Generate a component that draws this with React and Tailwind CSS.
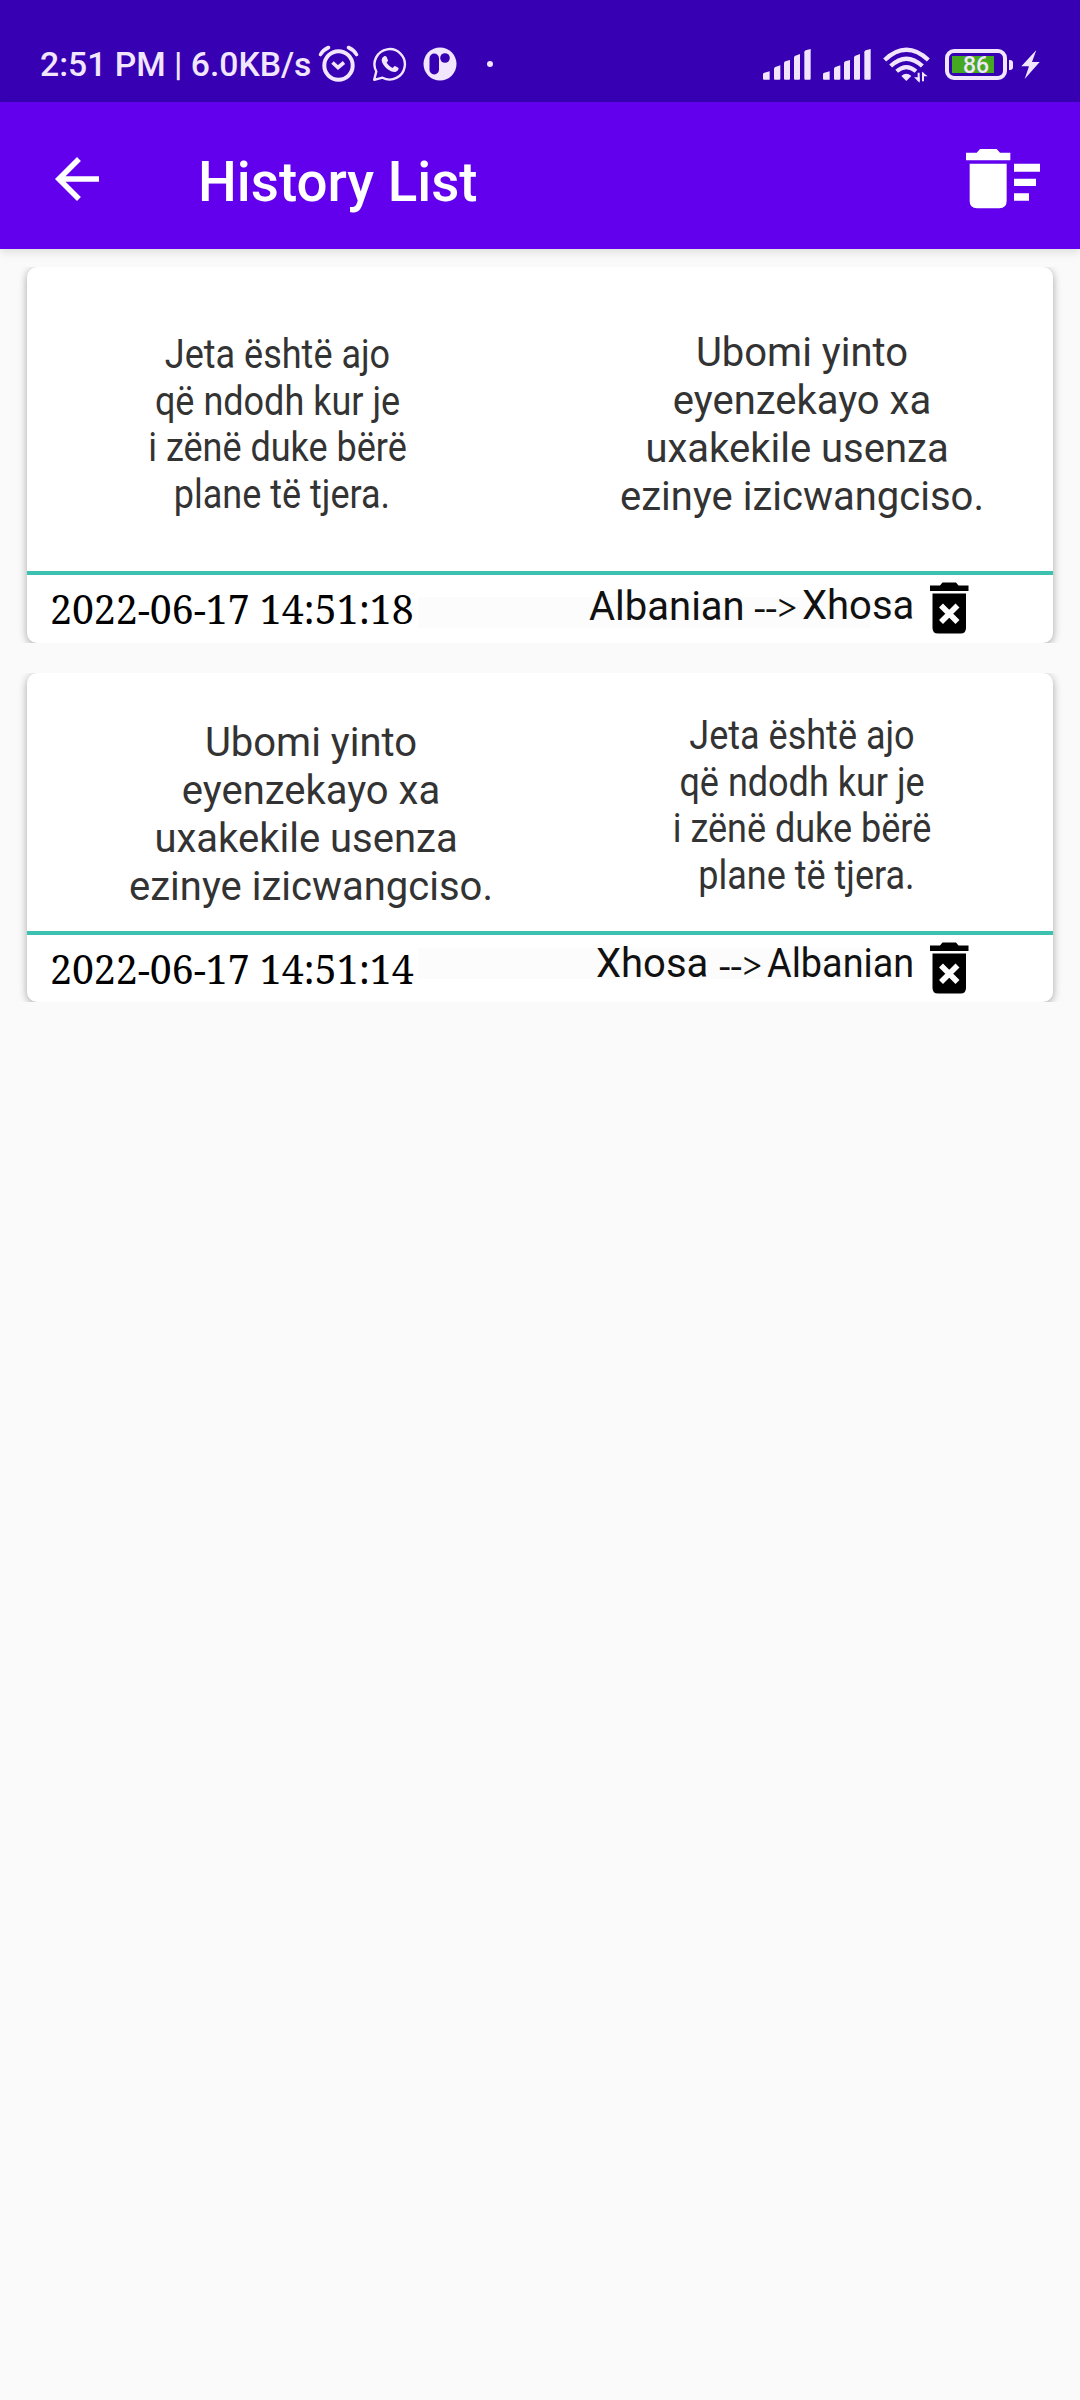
import React from "react";

const XHOSA = ["Ubomi yinto", "eyenzekayo xa", "uxakekile usenza\u00a0", "ezinye izicwangciso."];
const ALBANIAN = ["Jeta është ajo", "që ndodh kur je", "i zënë duke bërë", "\u00a0plane të tjera."];

function Signal({ className }) {
  return (
    <svg className={className} width="48" height="31" viewBox="0 0 144 93" fill="#f1e6fd">
      <path d="M0 76Q0 72 4 71L20 67V92H3Q0 92 0 89Z" />
      <path d="M33 60Q33 56 37 54L52 49V89Q52 92 49 92H36Q33 92 33 89Z" />
      <path d="M63 43Q63 39 67 37L81 33V89Q81 92 78 92H66Q63 92 63 89Z" />
      <path d="M93 26Q93 22 97 20L111 15V89Q111 92 108 92H96Q93 92 93 89Z" />
      <path d="M124 10Q124 6 128 4L143 0V89Q143 92 140 92H127Q124 92 124 89Z" />
    </svg>
  );
}

function StatusBar() {
  return (
    <div className="flex h-[102px] items-center bg-[#3700b3] pt-[26px] pl-[40px] text-[#f1e6fd]">
      <span className="mt-[2px] w-[278px] whitespace-nowrap text-[33.7px] leading-[40px] font-medium">2:51 PM | 6.0KB/s</span>
      <svg width="41" height="38" viewBox="0 0 41 38" fill="none" stroke="#f1e6fd">
        <circle cx="20.5" cy="20.5" r="14.2" strokeWidth="4" />
        <path d="M2.5 9.5Q5 5 10.500 2.500M38.500 9.500Q36 5 30.500 2.500" strokeWidth="3.600" strokeLinecap="round" />
        <path d="M14.500 17.500L20 22.500L26 17.500" strokeWidth="3.600" />
      </svg>
      <svg className="ml-[14px]" width="34" height="34" viewBox="0 0 34 34" fill="none">
        <path d="M1.200 32.800L3.300 24.500A15.200 15.200 0 1 1 9.500 30.700Z" stroke="#f1e6fd" strokeWidth="2.400" strokeLinejoin="round" />
        <path d="M11.200 9.200C12 8.900 13.200 9 13.600 9.900L15 13.200C15.200 14 14 15 13.600 15.600C15 18.300 17.200 20 19.700 21C20.500 20.300 21.300 18.900 22 19.100L25.300 20.800C26 21.400 25.300 24.300 22.400 25C18 25.600 10 20 8.700 13.700C8.500 11.500 9.600 10 11.200 9.200Z" fill="#f1e6fd" />
      </svg>
      <svg className="ml-[16px]" width="34" height="34" viewBox="0 0 34 34">
        <circle cx="17" cy="17" r="16.500" fill="#f1e6fd" />
        <rect x="6.500" y="6.500" width="9.500" height="21" rx="4.700" fill="#3700b3" />
        <circle cx="22" cy="11" r="4.800" fill="#3700b3" />
      </svg>
      <span className="ml-[30px] size-[6px] rounded-full bg-[#f1e6fd]" />
      <div className="mt-[1px] ml-[270px] flex items-center">
        <Signal />
        <Signal className="ml-[12px]" />
        <svg className="ml-[12px]" width="48" height="36" viewBox="0 0 144 108" fill="none" stroke="#f1e6fd">
          <path d="M5 39Q70 -22 136 39" strokeWidth="13" />
          <path d="M23 57Q70 13 118 57" strokeWidth="13" />
          <path d="M41 73Q70 48 99 73" strokeWidth="12" />
          <path d="M55 87Q70 74 85 87L70 102Z" fill="#f1e6fd" stroke="none" />
          <path d="M107 77V103M120 103V77" strokeWidth="6" />
          <path d="M93 91L110 107V91ZM117 88H134L117 74Z" fill="#f1e6fd" stroke="none" />
        </svg>
        <div className="ml-[14px] flex h-[31px] w-[62px] items-center rounded-[9px] border-[4px] border-[#f1e6fd] pl-[3px]">
          <div className="flex h-[17px] w-[42px] items-center bg-[#45a821] pt-[2px] pl-[11px] text-[23px] leading-[17px] font-medium text-[#f1e6fd]">86</div>
        </div>
        <div className="ml-[2px] h-[10px] w-[4px] rounded-r-[3px] bg-[#f1e6fd]" />
        <svg className="ml-[8px]" width="19" height="29" viewBox="0 0 57 87" fill="#f1e6fd">
          <path d="M46 0L1 49H24L11 87L56 36H33Z" />
        </svg>
      </div>
    </div>
  );
}

function AppBar() {
  return (
    <div className="relative flex h-[147px] items-center bg-[#6200ee] pl-[44px] shadow-[0_3px_9px_rgba(0,0,0,0.12)]">
      <svg className="mt-[7px]" width="66" height="66" viewBox="0 0 24 24" fill="#fff">
        <path d="M20 11H7.830l5.590-5.590L12 4l-8 8 8 8 1.410-1.410L7.830 13H20v-2z" />
      </svg>
      <h1 className="mt-[13px] ml-[88px] text-[54.7px] leading-[64px] font-medium whitespace-nowrap text-white">History List</h1>
      <svg className="mt-[7px] mr-[40px] ml-auto" width="74" height="60" viewBox="198 148 222 180" fill="#fff">
        <path d="M198 159H230L240 148H290L300 159H331V182H198Z" />
        <path d="M209 192H320V304Q320 326 298 326H231Q209 326 209 304Z" />
        <path d="M342 192H420V216H342ZM342 237H408V259H342ZM342 281H387V303H342Z" />
      </svg>
    </div>
  );
}

function TrashX() {
  return (
    <svg width="39" height="52" viewBox="0 0 39 52">
      <path d="M0 3.500H10L12.500 0.500H26L28.500 3.500H38.500V9H0Z" />
      <path d="M2.500 11.500H36V46Q36 51.500 30.500 51.500H8Q2.500 51.500 2.500 46Z" />
      <path d="M11 23.500L27.500 40M27.500 23.500L11 40" stroke="#fff" strokeWidth="5.600" />
    </svg>
  );
}

function Phrase({ lines, className }) {
  return (
    <div className={className}>
      {lines.map((l) => (
        <div key={l} className="whitespace-nowrap">{l}</div>
      ))}
    </div>
  );
}

function DateText({ children }) {
  return (
    <div className="origin-left scale-x-[0.98] font-['Noto_Serif','Liberation_Serif',serif] text-[40px] leading-[54px] whitespace-nowrap">
      {children}
    </div>
  );
}

function CardShell({ className, children }) {
  return (
    <div className="overflow-hidden px-[9px]">
      <div className={className}>{children}</div>
    </div>
  );
}

export default function App() {
  return (
    <div className="h-[2400px] w-[1080px] overflow-hidden bg-[#fafafa] font-[Roboto,sans-serif]">
      <StatusBar />
      <AppBar />
      <div className="flex flex-col gap-[30px] px-[18px] pt-[18px]">
        <CardShell className="flex h-[376px] flex-col rounded-[10px] bg-white shadow-[0_2px_8px_rgba(0,0,0,0.35)]">
          <div className="flex h-[304px] text-center text-[40px] text-[#333]">
            <Phrase lines={ALBANIAN} className="w-[501px] origin-center scale-x-[0.9] pt-[65px] leading-[46.700px]" />
            <Phrase lines={XHOSA} className="ml-[23px] w-[502px] pt-[62px] leading-[48.100px]" />
          </div>
          <div className="h-[4px] bg-[#3cc0b0]" />
          <div className="relative isolate flex h-[68px] items-start text-black">
            <div className="absolute top-[22px] left-[391px] -z-10 h-[31px] w-[452px] bg-[#fcfcfc]" />
            <div className="mt-[7px] ml-[23px] w-[539px]"><DateText>2022-06-17 14:51:18</DateText></div>
            <div className="mt-[8px] w-[165px] text-[40px] leading-[48px] text-[#111]">Albanian</div>
            <div className="mt-[8px] w-[48px] font-['Noto_Serif','Liberation_Serif',serif] text-[37px] leading-[48px] whitespace-nowrap text-[#111]">--&gt;</div>
            <div className="mt-[7px] w-[128px] text-[40px] leading-[48px] text-[#111]">Xhosa</div>
            <div className="mt-[7px]"><TrashX /></div>
          </div>
        </CardShell>
        <CardShell className="flex h-[329px] flex-col rounded-[10px] bg-white shadow-[0_2px_8px_rgba(0,0,0,0.35)]">
          <div className="flex h-[258px] text-center text-[40px] text-[#333]">
            <Phrase lines={XHOSA} className="w-[568px] pt-[46px] leading-[48.100px]" />
            <Phrase lines={ALBANIAN} className="w-[414px] origin-center scale-x-[0.9] pt-[40px] leading-[46.700px]" />
          </div>
          <div className="h-[4px] bg-[#3cc0b0]" />
          <div className="relative isolate flex h-[67px] items-start text-black">
            <div className="absolute top-[13px] left-[391px] -z-10 h-[31px] w-[452px] bg-[#fcfcfc]" />
            <div className="mt-[7px] ml-[23px] w-[546px]"><DateText>2022-06-17 14:51:14</DateText></div>
            <div className="mt-[5px] w-[123px] text-[40px] leading-[48px] text-[#111]">Xhosa</div>
            <div className="mt-[6px] w-[48px] font-['Noto_Serif','Liberation_Serif',serif] text-[37px] leading-[48px] whitespace-nowrap text-[#111]">--&gt;</div>
            <div className="mt-[5px] w-[163px] origin-left scale-x-[0.945] text-[40px] leading-[48px] text-[#111]">Albanian</div>
            <div className="mt-[7px]"><TrashX /></div>
          </div>
        </CardShell>
      </div>
    </div>
  );
}
